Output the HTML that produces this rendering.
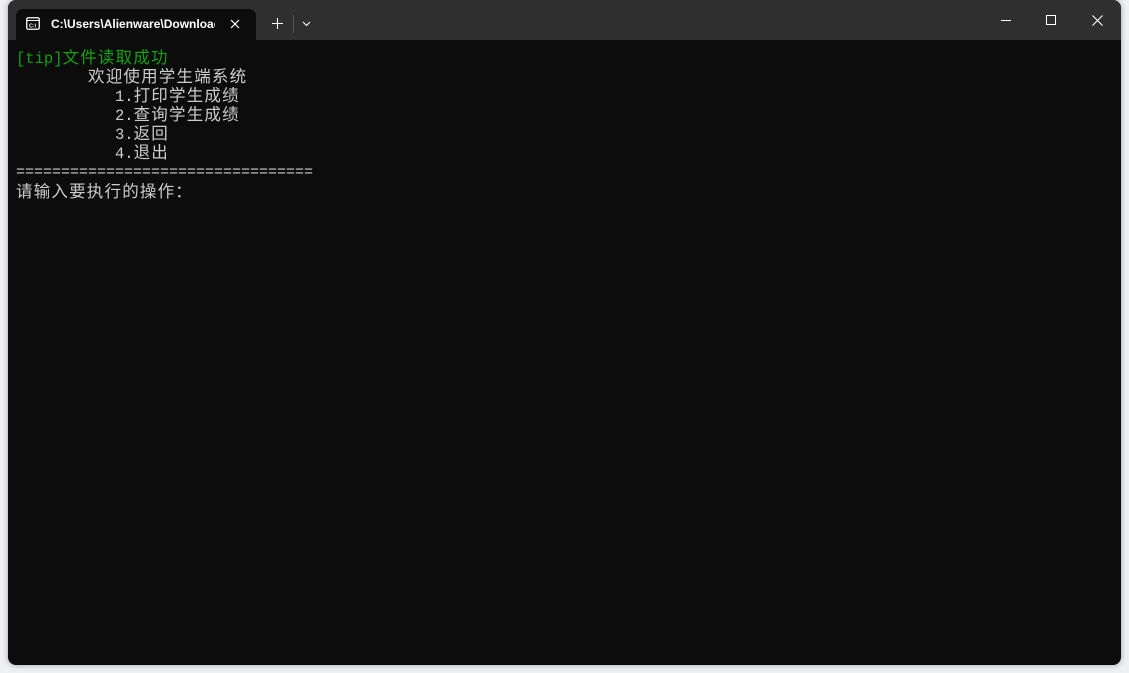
<!DOCTYPE html>
<html><head><meta charset="utf-8"><style>
body{margin:0;width:1129px;height:673px;background:#eef0f3;overflow:hidden;font-family:"Liberation Sans",sans-serif}
.win{position:absolute;left:8px;top:0;width:1113px;height:665px;background:#0c0c0c;border-radius:8px;overflow:hidden;box-shadow:0 0 6px rgba(0,0,0,.35)}
.title{position:absolute;left:0;top:0;width:100%;height:40px;background:#2f2f2f}
.tab{position:absolute;left:8px;top:9px;width:240px;height:31px;background:#0c0c0c;border-radius:7px 7px 0 0;color:#fff;font-size:12px;font-weight:bold}
.t{position:absolute;left:8px;font-family:"Liberation Mono","Noto Sans CJK SC",monospace;font-size:15.5px;line-height:19px;color:#cccccc;white-space:pre}
.c{font-family:"Noto Sans CJK SC",sans-serif;font-size:16.5px;letter-spacing:1.2px;line-height:19px}
</style></head><body>
<div class="win">
<div class="title">
<div class="tab">
<svg style="position:absolute;left:10px;top:8px" width="14" height="13" viewBox="0 0 14 13"><rect x="0.75" y="0.75" width="12.5" height="11.5" rx="1.5" fill="none" stroke="#fff" stroke-width="1.3"/><line x1="1" y1="3.5" x2="13" y2="3.5" stroke="#fff" stroke-width="1"/><text x="3" y="10.5" font-size="5.5" fill="#fff" font-family="Liberation Sans">C:\</text></svg>
<div style="position:absolute;left:35px;top:8px;width:164px;overflow:hidden;white-space:nowrap">C:\Users\Alienware\Downloads</div>
<svg style="position:absolute;left:214px;top:10px" width="10" height="10"><path d="M1 1L9 9M9 1L1 9" stroke="#fff" stroke-width="1.2"/></svg>
</div>
<svg style="position:absolute;left:264px;top:18px" width="11" height="11"><path d="M5.5 0V11M0 5.5H11" stroke="#fff" stroke-width="1.1"/></svg>
<div style="position:absolute;left:285px;top:15px;width:1px;height:18px;background:#555"></div>
<svg style="position:absolute;left:294px;top:21px" width="9" height="6"><path d="M1 1L4.5 4.5L8 1" stroke="#fff" stroke-width="1.1" fill="none"/></svg>
<div style="position:absolute;left:993px;top:20px;width:10px;height:1px;background:#fff"></div>
<div style="position:absolute;left:1038px;top:15px;width:8px;height:8px;border:1px solid #fff"></div>
<svg style="position:absolute;left:1084px;top:15px" width="11" height="11"><path d="M0.5 0.5L10.5 10.5M10.5 0.5L0.5 10.5" stroke="#fff" stroke-width="1.1"/></svg>
</div>
<div class="t" style="top:47px;color:#13a10e">[tip]<span class="c">文件读取成功</span></div>
<div class="t" style="top:66px;left:80px"><span class="c">欢迎使用学生端系统</span></div>
<div class="t" style="top:85px;left:107px">1.<span class="c">打印学生成绩</span></div>
<div class="t" style="top:104px;left:107px">2.<span class="c">查询学生成绩</span></div>
<div class="t" style="top:123px;left:107px">3.<span class="c">返回</span></div>
<div class="t" style="top:142px;left:107px">4.<span class="c">退出</span></div>
<div class="t" style="top:163px;font-size:15px">=================================</div>
<div class="t" style="top:181px"><span class="c">请输入要执行的操作：</span></div>
</div>
</body></html>
